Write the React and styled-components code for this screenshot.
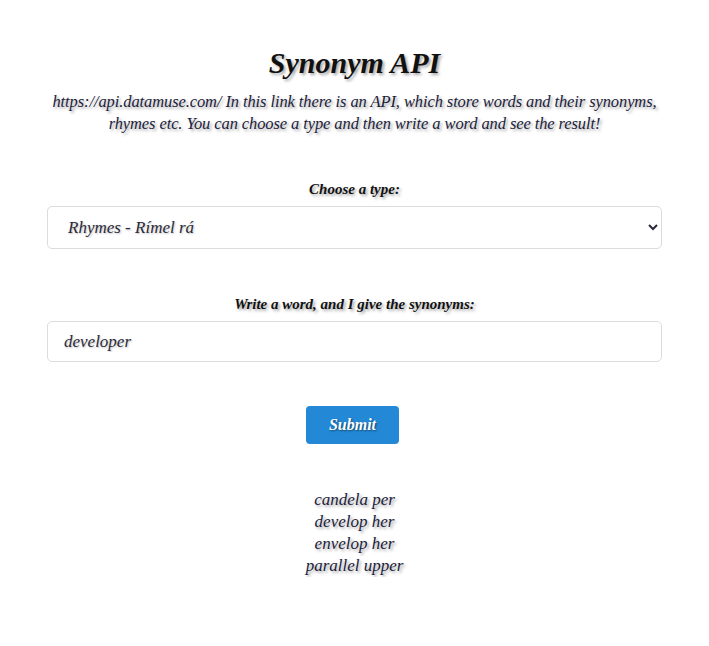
import React, { useState } from 'react'
import styled, { createGlobalStyle } from 'styled-components'

const Global = createGlobalStyle`
  body {
    margin: 0;
    background: #fff;
    font-family: "Liberation Serif", "DejaVu Serif", serif;
    font-style: italic;
    color: #1c1c3a;
  }
`

const Page = styled.div`
  width: 615px;
  margin: 0 auto;
  padding-top: 45px;
  text-align: center;
  text-shadow: 2px 2px 3px rgba(0, 0, 0, 0.35);
`

const Title = styled.h1`
  margin: 0;
  font-size: 30px;
  line-height: 36px;
  font-weight: bold;
  color: #111;
`

const Intro = styled.p`
  margin: 10px 0 0;
  font-size: 16.5px;
  line-height: 22px;
  letter-spacing: -0.1px;
`

const Field = styled.div`
  margin-top: ${p => p.top}px;
`

const Label = styled.label`
  display: block;
  font-size: 15px;
  line-height: 20px;
  font-weight: bold;
  color: #111;
  margin-bottom: 7px;
`

const Select = styled.select`
  width: 100%;
  height: 43px;
  box-sizing: border-box;
  padding: 0 12px 0 16px;
  border: 1px solid #dcdcdc;
  border-radius: 5px;
  background: #fff;
  font-family: inherit;
  font-style: italic;
  font-size: 17px;
  color: #2a2a3a;
  text-shadow: 1px 1px 2px rgba(0, 0, 0, 0.25);
`

const Input = styled.input`
  width: 100%;
  height: 41px;
  box-sizing: border-box;
  padding: 0 16px;
  border: 1px solid #dcdcdc;
  border-radius: 5px;
  font-family: inherit;
  font-style: italic;
  font-size: 17px;
  color: #2a2a3a;
  text-shadow: 1px 1px 2px rgba(0, 0, 0, 0.25);
  outline: none;
`

const Button = styled.button`
  margin: 44px 4px 0 0;
  width: 93px;
  height: 38px;
  border: none;
  border-radius: 4px;
  background: #2389d7;
  color: #fff;
  font-family: inherit;
  font-style: italic;
  font-weight: bold;
  font-size: 16px;
  text-shadow: 1px 1px 2px rgba(0, 0, 0, 0.5);
  cursor: pointer;
`

const Results = styled.div`
  margin-top: 45px;
  font-size: 17px;
  line-height: 22px;
`

const words = ['candela per', 'develop her', 'envelop her', 'parallel upper']

export default function App() {
  const [word, setWord] = useState('developer')
  return (
    <>
      <Global />
      <Page>
        <Title>Synonym API</Title>
        <Intro>
          https://api.datamuse.com/ In this link there is an API, which store words and their synonyms,
          rhymes etc. You can choose a type and then write a word and see the result!
        </Intro>
        <Field top={44}>
          <Label>Choose a type:</Label>
          <Select defaultValue="rel_rhy">
            <option value="rel_rhy">Rhymes - Rímel rá</option>
            <option value="rel_syn">Synonyms - Szinonimák</option>
          </Select>
        </Field>
        <Field top={45}>
          <Label>Write a word, and I give the synonyms:</Label>
          <Input value={word} onChange={e => setWord(e.target.value)} />
        </Field>
        <Button>Submit</Button>
        <Results>
          {words.map(w => <div key={w}>{w}</div>)}
        </Results>
      </Page>
    </>
  )
}
